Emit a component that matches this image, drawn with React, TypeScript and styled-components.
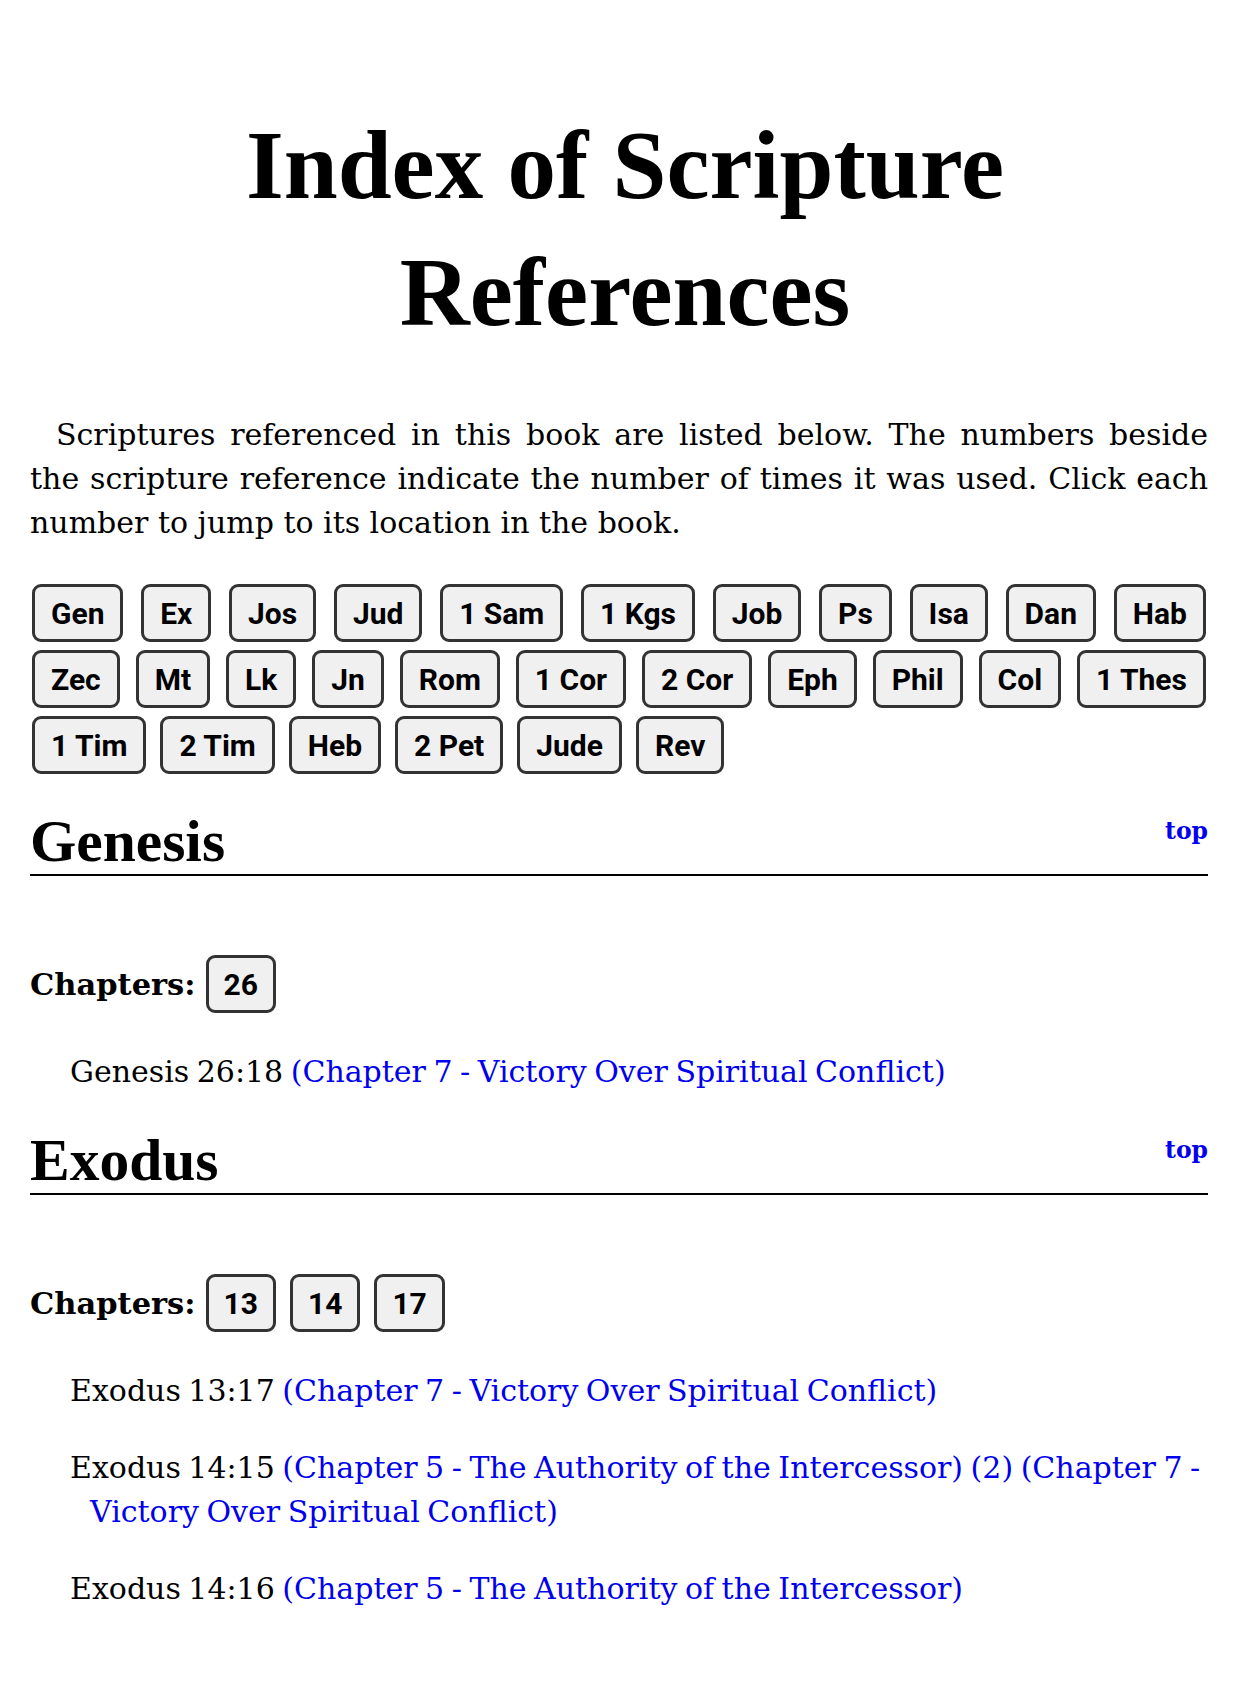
import styled, { createGlobalStyle } from "styled-components";

const GlobalStyle = createGlobalStyle`
    body {
        margin: 0;
        background: #fff;
        color: #000;
        font-family: "DejaVu Serif", "Liberation Serif", serif;
    }
`;

type Reference = {
    verse: string;
    links: string[];
};

type Book = {
    name: string;
    chapters: string[];
    references: Reference[];
};

const bookRows: string[][] = [
    ["Gen", "Ex", "Jos", "Jud", "1 Sam", "1 Kgs", "Job", "Ps", "Isa", "Dan", "Hab"],
    ["Zec", "Mt", "Lk", "Jn", "Rom", "1 Cor", "2 Cor", "Eph", "Phil", "Col", "1 Thes"],
    ["1 Tim", "2 Tim", "Heb", "2 Pet", "Jude", "Rev"],
];

const books: Book[] = [
    {
        name: "Genesis",
        chapters: ["26"],
        references: [
            { verse: "Genesis 26:18", links: ["(Chapter 7 - Victory Over Spiritual Conflict)"] },
        ],
    },
    {
        name: "Exodus",
        chapters: ["13", "14", "17"],
        references: [
            { verse: "Exodus 13:17", links: ["(Chapter 7 - Victory Over Spiritual Conflict)"] },
            {
                verse: "Exodus 14:15",
                links: [
                    "(Chapter 5 - The Authority of the Intercessor)",
                    "(2)",
                    "(Chapter 7 - Victory Over Spiritual Conflict)",
                ],
            },
            { verse: "Exodus 14:16", links: ["(Chapter 5 - The Authority of the Intercessor)"] },
        ],
    },
];

const App = () => {
    return (
        <>
            <GlobalStyle />
            <Page id="top">
                <Title>Index of Scripture References</Title>

                <Intro>
                    Scriptures referenced in this book are listed below. The numbers beside the
                    scripture reference indicate the number of times it was used. Click each
                    number to jump to its location in the book.
                </Intro>

                <BookNav>
                    {bookRows.map((row, i) => (
                        <BookRow key={i} $last={i === bookRows.length - 1}>
                            {row.map((abbr) => (
                                <PillButton key={abbr} href="#">{abbr}</PillButton>
                            ))}
                        </BookRow>
                    ))}
                </BookNav>

                {books.map((book) => (
                    <section key={book.name}>
                        <BookHeader>
                            <BookTitle>{book.name}</BookTitle>
                            <TopLink href="#top">top</TopLink>
                        </BookHeader>

                        <ChapterRow>
                            <ChapterLabel>Chapters:</ChapterLabel>
                            {book.chapters.map((ch) => (
                                <PillButton key={ch} href="#" $compact>{ch}</PillButton>
                            ))}
                        </ChapterRow>

                        {book.references.map((ref) => (
                            <RefLine key={ref.verse}>
                                {ref.verse}{" "}
                                {ref.links.map((label, i) => (
                                    <span key={i}>
                                        <RefLink href="#">{label}</RefLink>
                                        {i < ref.links.length - 1 ? " " : ""}
                                    </span>
                                ))}
                            </RefLine>
                        ))}
                    </section>
                ))}
            </Page>
        </>
    );
};

export default App;


const Page = styled.main`
    padding: 102px 48px 60px 30px;
`;

const Title = styled.h1`
    margin: 0 auto 57px;
    max-width: 900px;
    padding-left: 12px;
    text-align: center;
    font-family: "Liberation Serif", serif;
    font-weight: 700;
    font-size: 97px;
    line-height: 127px;
`;

const Intro = styled.p`
    margin: 0 0 39px;
    text-align: justify;
    text-indent: 26px;
    font-size: 30px;
    line-height: 44px;
`;

const BookNav = styled.nav`
    display: flex;
    flex-direction: column;
    gap: 8px;
    padding: 0 2px;
    margin-bottom: 34px;
`;

const BookRow = styled.div<{ $last?: boolean }>`
    display: flex;
    justify-content: ${(p) => (p.$last ? "flex-start" : "space-between")};
    gap: 14px;
`;

const PillButton = styled.a<{ $compact?: boolean }>`
    display: inline-flex;
    align-items: center;
    justify-content: center;
    box-sizing: border-box;
    height: 58px;
    padding: ${(p) => (p.$compact ? "0 15px" : "0 16px")};
    background-color: #f0f0f0;
    border: 3px solid #333;
    border-radius: 9px;
    color: #000;
    text-decoration: none;
    font-family: Roboto, "Liberation Sans", sans-serif;
    font-weight: 700;
    font-size: 30px;
    white-space: nowrap;
`;

const BookHeader = styled.div`
    display: flex;
    justify-content: space-between;
    align-items: flex-start;
    border-bottom: 2px solid #000;
    margin-bottom: 79px;
`;

const BookTitle = styled.h2`
    margin: 0;
    font-family: "Liberation Serif", serif;
    font-weight: 700;
    font-size: 59.5px;
    line-height: 66px;
`;

const TopLink = styled.a`
    margin-top: 8px;
    color: #0000ee;
    text-decoration: none;
    font-weight: 700;
    font-size: 23.5px;
    line-height: 30px;
`;

const ChapterRow = styled.div`
    display: flex;
    align-items: center;
    gap: 14px;
    margin-bottom: 37px;
`;

const ChapterLabel = styled.strong`
    font-size: 30.5px;
    margin-right: -4px;
`;

const RefLine = styled.p`
    margin: 0 0 33px;
    padding-left: 60px;
    text-indent: -20px;
    font-size: 30px;
    word-spacing: -2px;
    line-height: 44px;
`;

const RefLink = styled.a`
    color: #0000ee;
    text-decoration: none;
`;
